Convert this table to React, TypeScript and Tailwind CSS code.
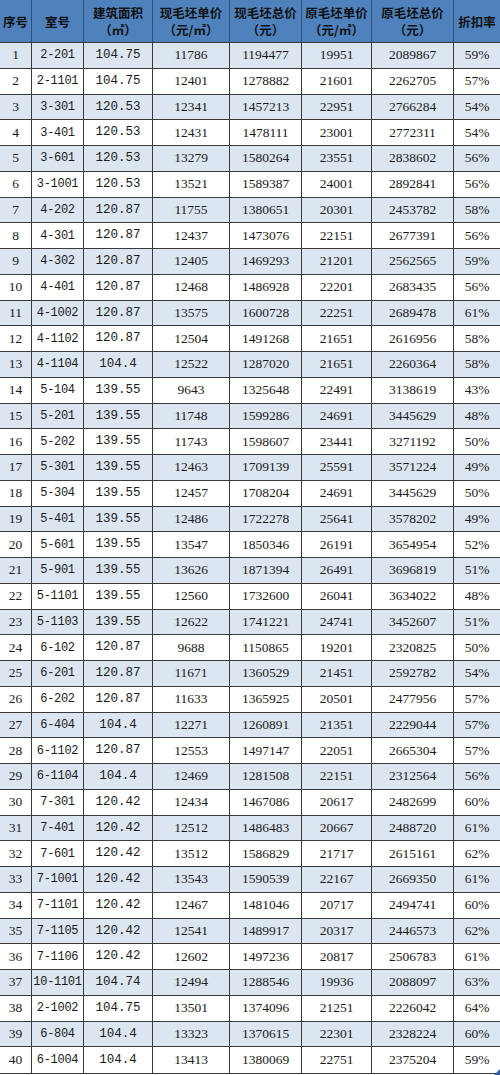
import React from 'react';

const rows: string[][] = [
  ['1', '2-201', '104.75', '11786', '1194477', '19951', '2089867', '59%'],
  ['2', '2-1101', '104.75', '12401', '1278882', '21601', '2262705', '57%'],
  ['3', '3-301', '120.53', '12341', '1457213', '22951', '2766284', '54%'],
  ['4', '3-401', '120.53', '12431', '1478111', '23001', '2772311', '54%'],
  ['5', '3-601', '120.53', '13279', '1580264', '23551', '2838602', '56%'],
  ['6', '3-1001', '120.53', '13521', '1589387', '24001', '2892841', '56%'],
  ['7', '4-202', '120.87', '11755', '1380651', '20301', '2453782', '58%'],
  ['8', '4-301', '120.87', '12437', '1473076', '22151', '2677391', '56%'],
  ['9', '4-302', '120.87', '12405', '1469293', '21201', '2562565', '59%'],
  ['10', '4-401', '120.87', '12468', '1486928', '22201', '2683435', '56%'],
  ['11', '4-1002', '120.87', '13575', '1600728', '22251', '2689478', '61%'],
  ['12', '4-1102', '120.87', '12504', '1491268', '21651', '2616956', '58%'],
  ['13', '4-1104', '104.4', '12522', '1287020', '21651', '2260364', '58%'],
  ['14', '5-104', '139.55', '9643', '1325648', '22491', '3138619', '43%'],
  ['15', '5-201', '139.55', '11748', '1599286', '24691', '3445629', '48%'],
  ['16', '5-202', '139.55', '11743', '1598607', '23441', '3271192', '50%'],
  ['17', '5-301', '139.55', '12463', '1709139', '25591', '3571224', '49%'],
  ['18', '5-304', '139.55', '12457', '1708204', '24691', '3445629', '50%'],
  ['19', '5-401', '139.55', '12486', '1722278', '25641', '3578202', '49%'],
  ['20', '5-601', '139.55', '13547', '1850346', '26191', '3654954', '52%'],
  ['21', '5-901', '139.55', '13626', '1871394', '26491', '3696819', '51%'],
  ['22', '5-1101', '139.55', '12560', '1732600', '26041', '3634022', '48%'],
  ['23', '5-1103', '139.55', '12622', '1741221', '24741', '3452607', '51%'],
  ['24', '6-102', '120.87', '9688', '1150865', '19201', '2320825', '50%'],
  ['25', '6-201', '120.87', '11671', '1360529', '21451', '2592782', '54%'],
  ['26', '6-202', '120.87', '11633', '1365925', '20501', '2477956', '57%'],
  ['27', '6-404', '104.4', '12271', '1260891', '21351', '2229044', '57%'],
  ['28', '6-1102', '120.87', '12553', '1497147', '22051', '2665304', '57%'],
  ['29', '6-1104', '104.4', '12469', '1281508', '22151', '2312564', '56%'],
  ['30', '7-301', '120.42', '12434', '1467086', '20617', '2482699', '60%'],
  ['31', '7-401', '120.42', '12512', '1486483', '20667', '2488720', '61%'],
  ['32', '7-601', '120.42', '13512', '1586829', '21717', '2615161', '62%'],
  ['33', '7-1001', '120.42', '13543', '1590539', '22167', '2669350', '61%'],
  ['34', '7-1101', '120.42', '12467', '1481046', '20717', '2494741', '60%'],
  ['35', '7-1105', '120.42', '12541', '1489917', '20317', '2446573', '62%'],
  ['36', '7-1106', '120.42', '12602', '1497236', '20817', '2506783', '61%'],
  ['37', '10-1101', '104.74', '12494', '1288546', '19936', '2088097', '63%'],
  ['38', '2-1002', '104.75', '13501', '1374096', '21251', '2226042', '64%'],
  ['39', '6-804', '104.4', '13323', '1370615', '22301', '2328224', '60%'],
  ['40', '6-1004', '104.4', '13413', '1380069', '22751', '2375204', '59%'],
];

const headers: [string, string?][] = [
  ['序号'],
  ['室号'],
  ['建筑面积', '（㎡）'],
  ['现毛坯单价', '（元/㎡）'],
  ['现毛坯总价', '（元）'],
  ['原毛坯单价', '（元/㎡）'],
  ['原毛坯总价', '（元）'],
  ['折扣率'],
];

const serif = "font-['Liberation_Serif','Noto_Sans_CJK_SC',serif]";
const mono = "font-['Liberation_Mono',monospace]";

export default function App() {
  return (
    <div className="relative w-[500px] h-[1075px] bg-white overflow-hidden">
      <div className="grid grid-cols-[32px_52px_69px_77px_72px_70px_82px_46px] border-b border-[#3a3a3a]">
        {headers.map(([a, b], i) => (
          <div
            key={i}
            className={`h-[43px] flex flex-col items-center justify-center bg-[#4f81bd] border-b border-[#3a3a3a] ${
              i < 7 ? 'border-r' : ''
            } border-r-[#2f4f75] font-['Noto_Sans_CJK_SC',sans-serif] font-bold text-[12.5px] leading-[17px] text-[#111]`}
          >
            <span className="block leading-[17px]">{a}</span>
            {b && <span className="block leading-[17px]">{b}</span>}
          </div>
        ))}
        {rows.map((r, ri) =>
          r.map((c, ci) => (
            <div
              key={`${ri}-${ci}`}
              className={`h-[25.75px] flex items-center justify-center ${
                ri % 2 === 0 ? 'bg-[#dce6f1]' : 'bg-white'
              } ${ri < rows.length - 1 ? 'border-b' : ''} ${ci < 7 ? 'border-r' : ''} border-[#3a3a3a] text-[#1a1a1a] ${
                ci === 1
                  ? `${mono} text-[12px] tracking-[-0.3px]`
                  : ci === 2
                    ? `${mono} text-[12.5px]`
                    : `${serif} text-[13.5px]`
              }`}
            >
              {c}
            </div>
          ))
        )}
      </div>
      <div className="absolute right-0 bottom-0 w-0 h-0 border-l-[6px] border-l-transparent border-b-[6px] border-b-[#3b5f9a]" />
    </div>
  );
}
